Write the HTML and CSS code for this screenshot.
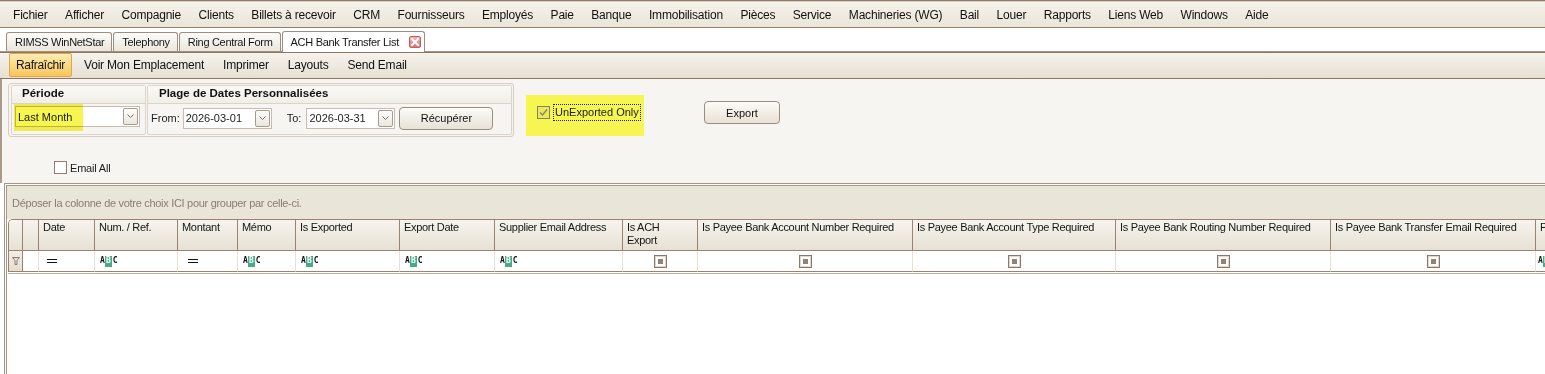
FILE: index.html
```html
<!DOCTYPE html>
<html lang="fr">
<head>
<meta charset="utf-8">
<title>ACH Bank Transfer List</title>
<link rel="stylesheet" href="styles.css">
</head>
<body>
<nav class="menubar">
  <span class="menu-item">Fichier</span>
  <span class="menu-item">Afficher</span>
  <span class="menu-item">Compagnie</span>
  <span class="menu-item">Clients</span>
  <span class="menu-item">Billets à recevoir</span>
  <span class="menu-item">CRM</span>
  <span class="menu-item">Fournisseurs</span>
  <span class="menu-item">Employés</span>
  <span class="menu-item">Paie</span>
  <span class="menu-item">Banque</span>
  <span class="menu-item">Immobilisation</span>
  <span class="menu-item">Pièces</span>
  <span class="menu-item">Service</span>
  <span class="menu-item">Machineries (WG)</span>
  <span class="menu-item">Bail</span>
  <span class="menu-item">Louer</span>
  <span class="menu-item">Rapports</span>
  <span class="menu-item">Liens Web</span>
  <span class="menu-item">Windows</span>
  <span class="menu-item">Aide</span>
</nav>

<div class="tabstrip">
  <div class="tab">RIMSS WinNetStar</div>
  <div class="tab">Telephony</div>
  <div class="tab">Ring Central Form</div>
  <div class="tab tab-active">ACH Bank Transfer List<span class="tab-close"><svg width="10" height="10" viewBox="0 0 10 10"><path d="M2 2L8 8M8 2L2 8" stroke="#fff" stroke-width="2" stroke-linecap="square"/></svg></span></div>
</div>

<div class="toolbar">
  <span class="tool tool-hot">Rafraîchir</span>
  <span class="tool">Voir Mon Emplacement</span>
  <span class="tool">Imprimer</span>
  <span class="tool">Layouts</span>
  <span class="tool">Send Email</span>
</div>

<div class="filters">
  <div class="filters-row">
    <div class="groupbox">
      <section class="gsec gsec-period">
        <div class="gsec-head">Période</div>
        <div class="gsec-body gsec-body-period">
          <div class="combo combo-period">
            <span class="combo-text">Last Month</span>
            <span class="combo-btn"><svg width="7" height="5" viewBox="0 0 7 5"><path d="M0.5 0.5L3.5 3.5L6.5 0.5" fill="none" stroke="#7b6b5f"/></svg></span>
          </div>
          <span class="hilite"></span>
        </div>
      </section>
      <section class="gsec gsec-range">
        <div class="gsec-head">Plage de Dates Personnalisées</div>
        <div class="gsec-body gsec-body-range">
          <span class="lbl">From:</span>
          <div class="combo combo-date combo-from">
            <span class="combo-text">2026-03-01</span>
            <span class="combo-btn"><svg width="7" height="5" viewBox="0 0 7 5"><path d="M0.5 0.5L3.5 3.5L6.5 0.5" fill="none" stroke="#7b6b5f"/></svg></span>
          </div>
          <span class="lbl lbl-to">To:</span>
          <div class="combo combo-date combo-to">
            <span class="combo-text">2026-03-31</span>
            <span class="combo-btn"><svg width="7" height="5" viewBox="0 0 7 5"><path d="M0.5 0.5L3.5 3.5L6.5 0.5" fill="none" stroke="#7b6b5f"/></svg></span>
          </div>
          <button class="btn btn-fetch">Récupérer</button>
        </div>
      </section>
    </div>
    <div class="unexported">
      <span class="chk chk-on"><svg width="11" height="11" viewBox="0 0 11 11"><path d="M2 5.5L4.5 8L9 2.5" fill="none" stroke="#8f8462" stroke-width="1.4"/></svg></span>
      <span class="focus-label">UnExported Only</span>
    </div>
    <button class="btn btn-export">Export</button>
  </div>
  <div class="email-row">
    <span class="chk"></span>
    <span class="email-label">Email All</span>
  </div>
</div>

<div class="gridpanel">
  <div class="groupby">Déposer la colonne de votre choix ICI pour grouper par celle-ci.</div>
  <div class="grid">
    <div class="hcell hcell-ind"></div>
    <div class="hcell"></div>
    <div class="hcell">Date</div>
    <div class="hcell">Num. / Ref.</div>
    <div class="hcell">Montant</div>
    <div class="hcell">Mémo</div>
    <div class="hcell">Is Exported</div>
    <div class="hcell">Export Date</div>
    <div class="hcell">Supplier Email Address</div>
    <div class="hcell">Is ACH<br>Export</div>
    <div class="hcell">Is Payee Bank Account Number Required</div>
    <div class="hcell">Is Payee Bank Account Type Required</div>
    <div class="hcell">Is Payee Bank Routing Number Required</div>
    <div class="hcell">Is Payee Bank Transfer Email Required</div>
    <div class="hcell">Payee Bank Transfer Method</div>

    <div class="fcell fcell-ind"><svg width="8" height="9" viewBox="0 0 8 9"><path d="M0.5 0.5H7.5L5 3.5V7.5H3V3.5Z" fill="#e9e3d8" stroke="#8a7a6d"/></svg></div>
    <div class="fcell"></div>
    <div class="fcell"><span class="eq"></span></div>
    <div class="fcell"><span class="abc"><span>A</span><span class="abc-b">B</span><span>C</span></span></div>
    <div class="fcell"><span class="eq eq-wide"></span></div>
    <div class="fcell"><span class="abc"><span>A</span><span class="abc-b">B</span><span>C</span></span></div>
    <div class="fcell"><span class="abc"><span>A</span><span class="abc-b">B</span><span>C</span></span></div>
    <div class="fcell"><span class="abc"><span>A</span><span class="abc-b">B</span><span>C</span></span></div>
    <div class="fcell"><span class="abc"><span>A</span><span class="abc-b">B</span><span>C</span></span></div>
    <div class="fcell fcell-center"><span class="fcb"></span></div>
    <div class="fcell fcell-center"><span class="fcb"></span></div>
    <div class="fcell fcell-center"><span class="fcb"></span></div>
    <div class="fcell fcell-center"><span class="fcb"></span></div>
    <div class="fcell fcell-center"><span class="fcb"></span></div>
    <div class="fcell fcell-tight"><span class="abc"><span>A</span><span class="abc-b">B</span><span>C</span></span></div>
  </div>
</div>
</body>
</html>
```

FILE: styles.css
```css
* { box-sizing: border-box; }
html, body { margin: 0; padding: 0; }
body {
  width: 1545px;
  height: 374px;
  overflow: hidden;
  background: #fff;
  font-family: "Liberation Sans", Arial, sans-serif;
  font-size: 11px;
  color: #1c1c1c;
}

/* ---------- menu bar ---------- */
.menubar {
  display: flex;
  align-items: center;
  height: 28px;
  padding: 2px 0 0 4.25px;
  background: linear-gradient(#f6f3ec, #ebe5d8);
  border-top: 1px solid #8e7a6b;
  border-bottom: 1px solid #957f70;
  box-shadow: inset 0 1px 0 #d8cec3;
  font-size: 12px;
  letter-spacing: -0.2px;
  color: #111;
}
.menu-item { padding: 0 8.75px; white-space: nowrap; }

/* ---------- MDI tabs ---------- */
.tabstrip {
  display: flex;
  align-items: flex-end;
  gap: 1px;
  height: 24px;
  padding-left: 6px;
  background: #fff;
  border-bottom: 1px solid #a29284;
  font-size: 11px;
  letter-spacing: -0.3px;
}
.tab {
  display: flex;
  align-items: center;
  height: 19px;
  padding: 0 7px 0 8px;
  border: 1px solid #9d8d80;
  border-bottom: none;
  border-radius: 3px 3px 0 0;
  background: linear-gradient(#fdfcfa, #ebe6dc);
  white-space: nowrap;
  color: #151515;
}
.tab-active {
  position: relative;
  height: 21px;
  margin-bottom: -1px;
  padding-right: 3px;
  background: #fff;
}
.tab-close {
  display: flex;
  align-items: center;
  justify-content: center;
  width: 12px;
  height: 12px;
  margin-left: 10px;
  border: 1px solid #c55f5f;
  border-radius: 2px;
  background: linear-gradient(#f4b0b0, #e07575);
}

/* ---------- toolbar ---------- */
.toolbar {
  display: flex;
  align-items: flex-start;
  gap: 3px;
  height: 27px;
  padding-left: 9px;
  background: linear-gradient(#f6f3ed, #e7e0d1);
  border-top: 1px solid #8c7767;
  border-bottom: 1px solid #8c7767;
  font-size: 12px;
  letter-spacing: -0.2px;
  color: #111;
}
.tool {
  display: flex;
  align-items: center;
  height: 24px;
  padding: 0 7px;
  border: 1px solid transparent;
  border-radius: 2px;
  white-space: nowrap;
}
.tool-hot {
  padding: 0 6px 0 6px;
  margin-right: 1px;
  letter-spacing: -0.3px;
  background: linear-gradient(#fdecb3, #f8c65a);
  border-color: #e3a744;
}

/* ---------- filter panel ---------- */
.filters {
  height: 104px;
  background: #f7f5f1;
  border-left: 2px solid #ab9b8d;
}
.filters-row {
  display: flex;
  align-items: flex-start;
  padding: 4px 0 0 6px;
}
.groupbox {
  display: flex;
  gap: 1px;
  width: 506px;
  height: 54px;
  padding: 1px 1px 1px 2px;
  border: 1px solid #d5cdc2;
  border-radius: 3px;
}
.gsec {
  display: flex;
  flex-direction: column;
  border: 1px solid #dcd4c9;
  border-radius: 2px;
  background: #f7f5f1;
}
.gsec-period { width: 135px; }
.gsec-range { flex: 1; }
.gsec-head {
  height: 18px;
  padding: 1px 0 0 10px;
  border-bottom: 1px solid #dcd4c9;
  background: linear-gradient(#faf9f6, #f1eee7);
  font-weight: bold;
  font-size: 11.5px;
  color: #111;
}
.gsec-range .gsec-head { padding-left: 11px; }
.gsec-body { position: relative; flex: 1; display: flex; }
.gsec-body-period { align-items: flex-start; padding-top: 2px; }
.gsec-body-range { align-items: center; padding: 0 0 2px 3px; }

.combo {
  display: flex;
  align-items: center;
  height: 21px;
  padding: 0 1px 0 2px;
  border: 1px solid #c6bcb1;
  background: #fff;
}
.combo-text { flex: 1; white-space: nowrap; }
.combo-btn {
  display: flex;
  align-items: center;
  justify-content: center;
  width: 15px;
  height: 17px;
  border: 1px solid #a99a8b;
  border-radius: 2px;
  background: linear-gradient(#fefdfb, #ebe5dc);
}
.combo-period { width: 125px; margin-left: 3px; }
.combo-date { width: 89px; }
.combo-from { margin-left: 3px; }
.combo-to { margin-left: 5px; }
.lbl-to { margin-left: 15px; }

.hilite {
  position: absolute;
  left: 2px;
  top: 0;
  width: 69px;
  height: 27px;
  background: #f6f552;
  mix-blend-mode: multiply;
}

.btn {
  font-family: inherit;
  font-size: 11px;
  color: #111;
  padding: 0;
  border: 1px solid #9d8c7e;
  border-radius: 4px;
  background: linear-gradient(#fcfbf8, #e8e2d6);
}
.btn-fetch { width: 94px; height: 23px; margin-left: 4px; }
.btn-export { width: 76px; height: 23px; margin: 18px 0 0 60px; }

.unexported {
  display: flex;
  align-items: flex-start;
  width: 118px;
  height: 41px;
  margin: 12px 0 0 12px;
  padding: 9px 0 0 11px;
  background: #f6f552;
}
.chk {
  display: flex;
  align-items: center;
  justify-content: center;
  width: 13px;
  height: 13px;
  border: 1px solid #8e7d70;
  background: #fff;
}
.chk-on {
  margin-top: 2px;
  border-color: #8b7f62;
  background: #ebe85a;
}
.focus-label {
  height: 17px;
  margin-left: 3px;
  padding: 1px 1px 0 1px;
  border: 1px dotted #222;
  white-space: nowrap;
}
.email-row {
  display: flex;
  align-items: center;
  margin: 24px 0 0 52px;
}
.email-label { margin-left: 3px; letter-spacing: -0.2px; }

/* ---------- grid ---------- */
.gridpanel {
  height: 191px;
  margin-left: 4px;
  border-top: 3px double #a69686;
  border-left: 3px double #a69686;
  background: #fff;
  overflow: hidden;
}
.groupby {
  height: 33px;
  padding: 11px 0 0 5px;
  background: #eae5d9;
  color: #8a7c6f;
  letter-spacing: -0.3px;
  white-space: nowrap;
}
.grid {
  display: grid;
  grid-template-columns: 14px 16px 56px 83px 60px 58px 104px 95px 128px 75px 215px 203px 215px 205px 120px;
  grid-template-rows: 31px 21px;
  width: max-content;
  margin-left: 1px;
  border-top: 1px solid #9a8373;
  border-left: 1px solid #9a8373;
  border-top-left-radius: 5px;
  box-shadow: 0 1px 0 #fff, 0 2px 0 #b9ab9e;
  letter-spacing: -0.3px;
}
.hcell {
  padding: 1px 0 0 4px;
  line-height: 13px;
  border-right: 1px solid #9a8373;
  border-bottom: 1px solid #9a8373;
  background: linear-gradient(#f7f4ee, #e7e1d4);
  white-space: nowrap;
  overflow: hidden;
  color: #151515;
}
.hcell-ind { border-top-left-radius: 4px; }
.fcell {
  display: flex;
  align-items: center;
  border-right: 1px solid #e7e1d5;
  border-bottom: 1px solid #9a8373;
  background: #fff;
}
.fcell-ind {
  padding-left: 3px;
  border-right-color: #9a8373;
  background: linear-gradient(#f2eee6, #e5ded1);
}
.fcell-center { justify-content: center; }

.eq {
  width: 10px;
  height: 4px;
  margin-left: 8px;
  border-top: 1px solid #111;
  border-bottom: 1px solid #111;
}
.eq-wide { margin-left: 10px; }

.abc {
  display: flex;
  align-items: center;
  margin-left: 5px;
  font-family: "DejaVu Sans Mono", monospace;
  font-weight: bold;
  font-size: 8px;
  letter-spacing: 0;
  line-height: 8px;
  color: #111;
}
.fcell-tight .abc { margin-left: 2px; }
.abc-b {
  display: flex;
  align-items: center;
  justify-content: center;
  width: 7px;
  height: 11px;
  margin: 0 1px 0 0;
  background: #45ad85;
  color: #fff;
}

.fcb {
  display: flex;
  align-items: center;
  justify-content: center;
  width: 13px;
  height: 13px;
  border: 1px solid #8c786a;
  background: #fff;
  box-shadow: inset 0 0 0 1px #e0d7cc;
}
.fcb::after {
  content: "";
  width: 5px;
  height: 5px;
  background: #958172;
}
```
